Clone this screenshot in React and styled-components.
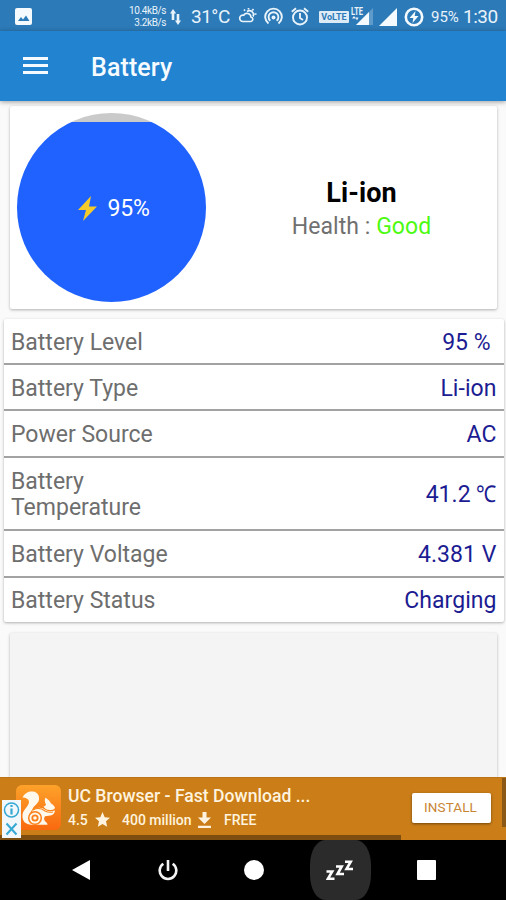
import React from 'react'
import styled, { createGlobalStyle } from 'styled-components'

const GlobalStyle = createGlobalStyle`
  * {
    box-sizing: border-box;
  }
  body {
    margin: 0;
    background-color: #fafafa;
    font-family: Roboto, 'Liberation Sans', sans-serif;
  }
`
const Screen = styled.div`
  display: flex;
  flex-direction: column;
  width: 506px;
  height: 900px;
  overflow: hidden;
  background-color: #fafafa;
`
const StatusBar = styled.div`
  display: flex;
  align-items: center;
  flex: none;
  height: 31px;
  padding: 2px 0 0 15px;
  color: #e9f3fb;
  background-color: #2c7ab7;
  white-space: nowrap;
`
const StatusIcon = styled.svg`
  flex: none;
  display: block;
  margin-left: ${props => props.$gap || 0}px;
`
const StatusText = styled.span`
  flex: none;
  width: ${props => props.$width}px;
  margin-left: ${props => props.$gap}px;
  font-size: ${props => props.$size}px;
  letter-spacing: ${props => props.$spacing || 0}px;
  line-height: 28px;
`
const NetSpeed = styled.div`
  flex: none;
  width: 46px;
  margin-left: 88px;
  font-size: 10px;
  line-height: 12px;
  letter-spacing: -0.4px;
  text-align: right;
  padding-top: 1px;
`
const VolteBadge = styled.span`
  flex: none;
  width: 30px;
  height: 12px;
  margin-left: 10px;
  border-radius: 1px;
  background-color: #dcebf6;
  color: #2c7ab7;
  font-size: 9px;
  font-weight: 700;
  line-height: 12px;
  text-align: center;
`
const AppBar = styled.header`
  position: relative;
  display: flex;
  align-items: center;
  flex: none;
  height: 70px;
  padding: 3px 0 0 23px;
  background-color: #2283d0;
  box-shadow: 0 1px 5px rgba(0, 0, 0, 0.38);
`
const MenuIcon = styled.div`
  display: flex;
  flex-direction: column;
  justify-content: space-between;
  width: 25px;
  height: 17px;
  margin-top: -4px;
`
const MenuLine = styled.span`
  height: 3px;
  background-color: #f4fafe;
`
const Title = styled.h1`
  margin: 0 0 0 43px;
  color: #f6fbff;
  font-size: 25px;
  font-weight: 500;
  letter-spacing: 0.1px;
  line-height: 30px;
`
const Content = styled.main`
  flex: 1;
  display: flex;
  flex-direction: column;
  min-height: 0;
  padding-top: 5px;
`
const Card = styled.section`
  flex: none;
  border-radius: 2px;
  background-color: #fff;
  box-shadow: 0 1px 3px rgba(0, 0, 0, 0.3);
`
const SummaryCard = styled(Card)`
  display: flex;
  align-items: center;
  height: 203px;
  margin: 0 9px 0 10px;
  padding-left: 7px;
`
const Gauge = styled.div`
  display: flex;
  align-items: center;
  justify-content: center;
  flex: none;
  width: 189px;
  height: 189px;
  padding: 2px 0 0 5px;
  border-radius: 50%;
  color: #fff;
  font-size: 23px;
  letter-spacing: -0.2px;
  background: linear-gradient(
    to top,
    #2062ff ${props => props.$level}%,
    #cacaca ${props => props.$level}%
  );
`
const GaugeBolt = styled.svg`
  display: block;
  margin: 0 9px 1px 0;
`
const Summary = styled.div`
  flex: 1;
  padding: 4px 0 0 20px;
  text-align: center;
`
const Chemistry = styled.div`
  color: #000;
  font-size: 27px;
  font-weight: 700;
  letter-spacing: 0.1px;
  line-height: 34px;
`
const Health = styled.div`
  color: #707070;
  font-size: 23px;
  letter-spacing: 0.05px;
  line-height: 33px;
`
const Good = styled.span`
  color: #4dfa12;
`
const DetailsCard = styled(Card)`
  margin: 10px 2.5px 0 4px;
`
const Row = styled.div`
  display: flex;
  align-items: center;
  justify-content: space-between;
  height: ${props => (props.$tall ? 73.5 : 46.5)}px;
  padding: 4px 7px 0 7px;
  border-bottom: 2px solid #a2a2a2;
  &:first-child {
    height: 45.5px;
  }
  &:last-child {
    height: 44.5px;
    padding-top: 3px;
    border-bottom: none;
  }
`
const Label = styled.span`
  width: 172px;
  color: #6e6e6e;
  font-size: 23px;
  line-height: 26.5px;
`
const Value = styled.span`
  color: #1c1c92;
  font-size: 23px;
  letter-spacing: 0.05px;
  line-height: 26.5px;
  white-space: pre;
`
const Unit = styled.span`
  display: inline-block;
  margin-left: -3px;
  transform: scaleX(0.88);
  transform-origin: right;
`
const EmptyCard = styled(Card)`
  flex: 1;
  margin: 11px 9px 0 10px;
  background-color: #f4f4f4;
  border-radius: 2px 2px 0 0;
`
const AdBanner = styled.aside`
  position: relative;
  display: flex;
  flex: none;
  height: 63px;
  padding: 7px 15px 0 16px;
  background-color: #cb7e18;
  color: #fff3df;
  border-top: 1px solid #bd7417;
`
const AdText = styled.div`
  flex: 1;
  padding-left: 7px;
`
const AdTitle = styled.div`
  font-size: 17.6px;
  font-weight: 500;
  line-height: 22px;
`
const AdMeta = styled.div`
  display: flex;
  align-items: center;
  height: 25px;
  font-size: 14px;
  font-weight: 500;
`
const AdMetaItem = styled.span`
  width: ${props => props.$width}px;
`
const MetaIcon = styled.svg`
  flex: none;
  margin-right: ${props => props.$gap}px;
`
const InstallButton = styled.button`
  width: 79px;
  height: 30px;
  margin-top: 8px;
  padding: 0 2px 2px 0;
  border: none;
  border-radius: 2px;
  background-color: #fff;
  box-shadow: 0 1px 3px rgba(0, 0, 0, 0.45);
  color: #c98534;
  font-family: inherit;
  font-size: 13.5px;
  letter-spacing: 0.1px;
`
const AdChoices = styled.div`
  position: absolute;
  left: 2px;
  top: 22px;
  width: 19px;
  height: 38px;
  background-color: #f1f7fa;
`
const BottomEdge = styled.div`
  position: absolute;
  left: 0;
  bottom: 0;
  width: 401px;
  height: 5px;
  background-color: #7d4e10;
`
const RightEdge = styled.div`
  position: absolute;
  right: 0;
  top: 0;
  width: 4px;
  height: 49px;
  background-color: #8b5815;
`
const NavBar = styled.nav`
  display: flex;
  flex: none;
  height: 60px;
  padding: 0 36px 0 38px;
  background-color: #000;
`
const NavItem = styled.div`
  display: flex;
  align-items: center;
  justify-content: center;
  flex: 1;
`
const NavHighlight = styled.div`
  display: flex;
  align-items: center;
  justify-content: center;
  width: 61px;
  height: 60px;
  border-radius: 15px / 25px;
  background-color: #2b2b2b;
`

const details = [
  { label: 'Battery Level', value: '95 % ' },
  { label: 'Battery Type', value: 'Li-ion' },
  { label: 'Power Source', value: 'AC' },
  { label: 'Battery Temperature', value: '41.2 ', unit: '℃', tall: true },
  { label: 'Battery Voltage', value: '4.381 V' },
  { label: 'Battery Status', value: 'Charging' },
]

const Status = () => (
  <StatusBar>
    <StatusIcon width="17" height="17" viewBox="0 0 17 17">
      <rect width="17" height="17" rx="2" fill="#f4fafe" />
      <path d="M3 13l3-4 2 2.500 3-4 3.500 5.500z" fill="#2c7ab7" />
    </StatusIcon>
    <NetSpeed>
      <div>10.4kB/s</div>
      <div>3.2kB/s</div>
    </NetSpeed>
    <StatusIcon $gap={4} width="11" height="16" viewBox="0 0 11 16" fill="#e9f3fb">
      <path d="M3 0l3.200 4.500H4.300v6.500H1.700V4.500H0z" />
      <path d="M8 16l3-4.500H9.300V5H6.700v6.500H5z" />
    </StatusIcon>
    <StatusText $gap={10} $width={38} $size={19} $spacing={-0.5}>31°C</StatusText>
    <StatusIcon $gap={9} width="19" height="18" viewBox="0 0 19 18" fill="none" stroke="#e9f3fb" strokeWidth="1.700">
      <path d="M5 13.500a3.200 3.200 0 1 1 .7-6.300A4 4 0 0 1 13 9a2.300 2.300 0 0 1 0 4.500z" />
      <path d="M9 3.500a4 4 0 0 1 6 5M10.500 0v1.500M15.500 1l-1.200 1.500M18.500 6h-2M6 1.500l1 1.200" />
    </StatusIcon>
    <StatusIcon $gap={7} width="19" height="19" viewBox="0 0 19 19" fill="none" stroke="#e9f3fb" strokeWidth="1.900">
      <path d="M4.500 16.500a8.300 8.300 0 1 1 10 0" />
      <path d="M6.300 13.800a4.900 4.900 0 1 1 6.400 0" />
      <circle cx="9.500" cy="10.500" r="2" fill="#e9f3fb" stroke="none" />
    </StatusIcon>
    <StatusIcon $gap={8} width="18" height="19" viewBox="0 0 18 19" fill="none" stroke="#e9f3fb" strokeWidth="1.900">
      <circle cx="9" cy="10.500" r="7" />
      <path d="M9 6v5l3 2M.8 4.700L5 1.200M17.200 4.700L13 1.200" />
    </StatusIcon>
    <VolteBadge>VoLTE</VolteBadge>
    <StatusIcon $gap={2} width="22" height="19" viewBox="0 0 22 19">
      <path d="M22 1v17H5z" fill="#5f9bca" />
      <path d="M18 5v13H5z" fill="#f4fafe" />
      <text x="0" y="8" fontSize="10" fontWeight="700" fill="#e9f3fb" textLength="12" lengthAdjust="spacingAndGlyphs">LTE</text>
      <path d="M3 9l2 2.500H1zM6 13.500L4.500 10.500h3z" fill="#e9f3fb" />
    </StatusIcon>
    <StatusIcon $gap={6} width="18" height="18" viewBox="0 0 18 18">
      <path d="M18 0v18H0z" fill="#f4fafe" />
    </StatusIcon>
    <StatusIcon $gap={7} width="20" height="20" viewBox="0 0 20 20">
      <circle cx="10" cy="10" r="8.200" fill="none" stroke="#f4fafe" strokeWidth="2.600" />
      <path d="M11.500 4L5.500 11h3.800L8.500 16l6-7h-3.800z" fill="#f4fafe" />
    </StatusIcon>
    <StatusText $gap={7} $width={32} $size={15}>95%</StatusText>
    <StatusText $gap={0} $width={34} $size={19} $spacing={-0.5}>1:30</StatusText>
  </StatusBar>
)

const Ad = () => (
  <AdBanner>
    <svg width="45" height="45" viewBox="0 0 45 45">
      <defs>
        <linearGradient id="tile" x1="0" y1="0" x2="0" y2="1">
          <stop offset="0" stopColor="#fda22a" />
          <stop offset="1" stopColor="#f9690f" />
        </linearGradient>
      </defs>
      <rect width="45" height="45" rx="6" fill="url(#tile)" />
      <g fill="#fff8ec">
        {/* tail, sweeping down to the hind leg */}
        <path d="M6.500 12.500C9 7.500 13 6 17 6.500c4.500.5 6.500 4 6 8-.5 4-5 6-6.500 9.500l-3 5L14 39.500C9 39 6 35.500 6.500 30c.5-5.500 6-8 6.500-13 0-3-3-4.500-6.500-4.500z" />
        {/* head and ear */}
        <path d="M29.500 12.500c2.500 2 4.500 3.500 5.500 6 2 1 3.500 2.500 4 4.500-1 1.700-3 2-5.500 2-3-.2-5-1.500-6-3.500 1.500-.3 2-1 2.500-2-1.500-2-1.500-5-.5-7z" />
        {/* back, paw and foot */}
        <path d="M16.500 25.500c4-3.500 9-3.500 13-.5 3 1.500 6 1.500 9.500.5-.5 3-2 4.500-4.500 5l-5.500.8c-1.500 2-1 4 .5 5.500 1 .8 2 1.700 2 3H14z" />
      </g>
      <path d="M17 25c4-2.500 8-2 12 1 3 1.500 5.500 1.500 8 1" fill="none" stroke="#fb8a1e" strokeWidth="1.200" />
      <circle cx="19" cy="33" r="6.300" fill="#fff8ec" stroke="#fb7f19" strokeWidth="1.500" />
      <circle cx="19" cy="33" r="2.700" fill="none" stroke="#fb7f19" strokeWidth="1.800" />
    </svg>
    <AdText>
      <AdTitle>UC Browser - Fast Download ...</AdTitle>
      <AdMeta>
        <AdMetaItem $width={27}>4.5</AdMetaItem>
        <MetaIcon $gap={12} width="15" height="15" viewBox="0 0 24 24" fill="#fff3df">
          <path d="M12 0l3.500 8.200 8.500.8-6.400 5.800L19.400 23.500 12 19l-7.400 4.500 1.800-8.700L0 9l8.500-.8z" />
        </MetaIcon>
        <AdMetaItem $width={76}>400 million</AdMetaItem>
        <MetaIcon $gap={13} width="13" height="16" viewBox="0 0 13 16" fill="#fff3df">
          <path d="M4.500 0h4v5.500H13L6.500 12 0 5.500h4.500zM0 13.700h13V16H0z" />
        </MetaIcon>
        <AdMetaItem $width={40}>FREE</AdMetaItem>
      </AdMeta>
    </AdText>
    <InstallButton>INSTALL</InstallButton>
    <BottomEdge />
    <RightEdge />
    <AdChoices>
      <svg width="19" height="38" viewBox="0 0 19 38" fill="none" stroke="#35a8d4" strokeWidth="1.500">
        <circle cx="9.500" cy="10" r="7" />
        <path d="M9.500 8.500v6M9.500 5v2" strokeWidth="2.200" />
        <path d="M4.500 23.500l10 11M14.500 23.500l-10 11" strokeWidth="2" />
      </svg>
    </AdChoices>
  </AdBanner>
)

const Navigation = () => (
  <NavBar>
    <NavItem>
      <svg width="18" height="20" viewBox="0 0 18 20" fill="#fff">
        <path d="M18 0v20L0 10z" />
      </svg>
    </NavItem>
    <NavItem>
      <svg width="20" height="21" viewBox="0 0 20 21" fill="none" stroke="#f4f4f4" strokeWidth="2.600">
        <path d="M10 0v11M5.300 3.800a8.300 8.300 0 1 0 9.400 0" />
      </svg>
    </NavItem>
    <NavItem>
      <svg width="20" height="20" viewBox="0 0 20 20" fill="#fff">
        <circle cx="10" cy="10" r="10" />
      </svg>
    </NavItem>
    <NavItem>
      <NavHighlight>
        <svg width="28" height="21" viewBox="0 0 28 21" fill="none" stroke="#fff" strokeWidth="2.600">
          <path d="M.5 11.500h5.700L2 18.700h6.500" />
          <path d="M10 6.500h5.700L11.500 14h6.500" />
          <path d="M19 1.700h5.700L20.500 9h6.500" />
        </svg>
      </NavHighlight>
    </NavItem>
    <NavItem>
      <svg width="19" height="20" viewBox="0 0 19 20" fill="#fff">
        <rect width="19" height="20" rx="1" />
      </svg>
    </NavItem>
  </NavBar>
)

const App = () => (
  <>
    <GlobalStyle />
    <Screen>
      <Status />
      <AppBar>
        <MenuIcon>
          <MenuLine />
          <MenuLine />
          <MenuLine />
        </MenuIcon>
        <Title>Battery</Title>
      </AppBar>
      <Content>
        <SummaryCard>
          <Gauge $level={95}>
            <GaugeBolt width="20" height="25" viewBox="0 0 20 25">
              <path d="M13 0L0 14h8L5 25l14-14.500h-8z" fill="#f5cb2c" />
            </GaugeBolt>
            95%
          </Gauge>
          <Summary>
            <Chemistry>Li-ion</Chemistry>
            <Health>
              Health : <Good>Good</Good>
            </Health>
          </Summary>
        </SummaryCard>
        <DetailsCard>
          {details.map(d => (
            <Row key={d.label} $tall={d.tall}>
              <Label>{d.label}</Label>
              <Value>
                {d.value}
                {d.unit && <Unit>{d.unit}</Unit>}
              </Value>
            </Row>
          ))}
        </DetailsCard>
        <EmptyCard />
      </Content>
      <Ad />
      <Navigation />
    </Screen>
  </>
)

export default App
